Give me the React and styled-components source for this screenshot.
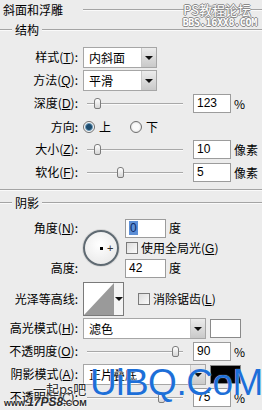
import React from 'react'
import styled, { createGlobalStyle } from 'styled-components'

const GlobalStyle = createGlobalStyle`
  body {
    margin: 0;
    background: #ececec;
  }
`

function Key({ k }) {
    return <Under>{k}</Under>
}

function Slider({ at }) {
    return (
        <Track>
            <Thumb $at={at} />
        </Track>
    )
}

function Select({ value, width }) {
    return (
        <SelectBox $w={width}>
            <SelectValue>{value}</SelectValue>
            <SelectButton><Arrow /></SelectButton>
        </SelectBox>
    )
}

export default function App() {
    return (
        <Dialog>
            <GlobalStyle />
            <Header>
                <Title>斜面和浮雕</Title>
                <Rule $gap={20} />
            </Header>
            <Stamp>
                <StampTop>PS教程论坛</StampTop>
                <StampBottom>BBS.16XX8.COM</StampBottom>
            </Stamp>

            <Legend $top={3}>
                <LegendLead />
                <LegendText>结构</LegendText>
                <Rule />
            </Legend>
            <Rows $top={9}>
                <Row>
                    <Label>样式(<Key k="T" />):</Label>
                    <Select value="内斜面" width={74} />
                </Row>
                <Row>
                    <Label>方法(<Key k="Q" />):</Label>
                    <Select value="平滑" width={74} />
                </Row>
                <Row>
                    <Label>深度(<Key k="D" />):</Label>
                    <Slider at={7} />
                    <NumBox>123</NumBox>
                    <Unit>%</Unit>
                </Row>
                <Row>
                    <Label>方向:</Label>
                    <Radio $on />
                    <RadioText $gap={19}>上</RadioText>
                    <Radio />
                    <RadioText>下</RadioText>
                </Row>
                <Row>
                    <Label>大小(<Key k="Z" />):</Label>
                    <Slider at={7} />
                    <NumBox>10</NumBox>
                    <Unit>像素</Unit>
                </Row>
                <Row>
                    <Label>软化(<Key k="F" />):</Label>
                    <Slider at={30} />
                    <NumBox>5</NumBox>
                    <Unit>像素</Unit>
                </Row>
            </Rows>
            <Divider />

            <Legend $top={5}>
                <LegendLead />
                <LegendText>阴影</LegendText>
                <Rule />
            </Legend>

            <AngleGrid>
                <GridLabel $row={1}>角度(<Key k="N" />):</GridLabel>
                <Dial>
                    <DialDot />
                    <Cross>+</Cross>
                </Dial>
                <GridCell $row={1}>
                    <NumBox $w={41}><Picked>0</Picked></NumBox>
                    <Unit>度</Unit>
                </GridCell>
                <GridCell $row={2}>
                    <Check $left={1} />
                    <CheckText>使用全局光(<Key k="G" />)</CheckText>
                </GridCell>
                <GridLabel $row={3}>高度:</GridLabel>
                <GridCell $row={3}>
                    <NumBox $w={41}>42</NumBox>
                    <Unit>度</Unit>
                </GridCell>
            </AngleGrid>

            <Row $h={34} $top={4}>
                <Label>光泽等高线:</Label>
                <Contour>
                    <svg width="30" height="32" viewBox="0 0 30 32">
                        <polygon points="0,0 30,0 0,32" fill="#ffffff" />
                        <polygon points="30,0 30,32 0,32" fill="#9a9a9a" />
                    </svg>
                    <ContourArrow><Arrow /></ContourArrow>
                </Contour>
                <Check $left={14} />
                <CheckText>消除锯齿(<Key k="L" />)</CheckText>
            </Row>

            <Rows $top={1}>
                <Row>
                    <Label>高光模式(<Key k="H" />):</Label>
                    <Select value="滤色" width={123} />
                    <Swatch $color="#ffffff" />
                </Row>
                <Row>
                    <Label>不透明度(<Key k="O" />):</Label>
                    <Slider at={85} />
                    <NumBox>90</NumBox>
                    <Unit>%</Unit>
                </Row>
                <Row>
                    <Label>阴影模式(<Key k="A" />):</Label>
                    <Select value="正片叠底" width={123} />
                    <Swatch $color="#000000" />
                </Row>
                <Row>
                    <Label>不透明度(<Key k="C" />):</Label>
                    <Slider at={71} />
                    <NumBox>75</NumBox>
                    <Unit>%</Unit>
                </Row>
            </Rows>

            <MarkLeft>
                <MarkSmall>一起ps吧</MarkSmall>
                <MarkSite>www.<b>17PS8</b>.COM</MarkSite>
            </MarkLeft>
            <MarkBig>UiBQ.CoM</MarkBig>
        </Dialog>
    )
}

const Dialog = styled.div`
    position: relative;
    width: 262px;
    height: 410px;
    overflow: hidden;
    background: #ececec;
    font-family: "Noto Sans CJK SC", "Liberation Sans", sans-serif;
    font-size: 12px;
    line-height: 14px;
    color: #000;
`
const Header = styled.div`
    display: flex;
    align-items: center;
    height: 20px;
    padding-left: 3px;
`
const Title = styled.div`
    white-space: nowrap;
`
const Rule = styled.div`
    flex: 1;
    height: 0;
    margin-left: ${p => p.$gap || 0}px;
    border-top: 1px solid #a4a4a4;
    border-bottom: 1px solid #fafafa;
`
const Divider = styled.div`
    margin-top: 5px;
    border-top: 1px solid #a4a4a4;
    border-bottom: 1px solid #fafafa;
`
const Stamp = styled.div`
    position: absolute;
    top: 2px;
    right: 5px;
    text-align: right;
    color: #fff;
    text-shadow: 1px 0 0 #8a8a8a, -1px 0 0 #8a8a8a, 0 1px 0 #8a8a8a, 0 -1px 0 #8a8a8a;
`
const StampTop = styled.div`
    font-size: 13px;
    line-height: 16px;
    padding-right: 6px;
`
const StampBottom = styled.div`
    font-family: "DejaVu Sans Mono", monospace;
    font-size: 10px;
    line-height: 10px;
    font-weight: bold;
    letter-spacing: -0.3px;
`
const Legend = styled.div`
    display: flex;
    align-items: center;
    height: 14px;
    margin-top: ${p => p.$top}px;
`
const LegendLead = styled.div`
    width: 12px;
    border-top: 1px solid #a4a4a4;
    border-bottom: 1px solid #fafafa;
`
const LegendText = styled.div`
    padding: 0 3px;
`
const Rows = styled.div`
    display: flex;
    flex-direction: column;
    margin-top: ${p => p.$top}px;
`
const Row = styled.div`
    display: flex;
    align-items: center;
    height: ${p => p.$h || 23}px;
    margin-top: ${p => p.$top || 0}px;
`
const Label = styled.div`
    width: 83px;
    flex-shrink: 0;
    box-sizing: border-box;
    padding-right: 5px;
    text-align: right;
    white-space: nowrap;
`
const Under = styled.span`
    font-family: "Liberation Sans", sans-serif;
    text-decoration: underline;
`
const SelectBox = styled.div`
    display: flex;
    width: ${p => p.$w}px;
    height: 21px;
    box-sizing: border-box;
    border: 1px solid #a6a6a6;
    background: #fff;
`
const SelectValue = styled.div`
    flex: 1;
    padding-left: 5px;
    line-height: 19px;
    white-space: nowrap;
`
const SelectButton = styled.div`
    width: 14px;
    display: flex;
    align-items: center;
    justify-content: center;
    border-left: 1px solid #c8c8c8;
    background: linear-gradient(#ececec, #c9c9c9);
`
const Arrow = styled.div`
    width: 0;
    height: 0;
    border-left: 4px solid transparent;
    border-right: 4px solid transparent;
    border-top: 4px solid #111;
`
const Track = styled.div`
    position: relative;
    width: 96px;
    height: 12px;
    margin: 0 10px 0 4px;
    &::before {
        content: '';
        position: absolute;
        left: 0;
        right: 0;
        top: 5px;
        border-top: 1px solid #a8a8a8;
        border-bottom: 1px solid #fafafa;
    }
`
const Thumb = styled.div`
    position: absolute;
    left: ${p => p.$at}px;
    top: 0;
    width: 7px;
    height: 11px;
    box-sizing: border-box;
    border: 1px solid #7c7c7c;
    border-radius: 3px 3px 2px 2px;
    background: linear-gradient(#ffffff, #d6d6d6);
`
const NumBox = styled.div`
    width: ${p => p.$w || 38}px;
    height: 19px;
    box-sizing: border-box;
    border: 1px solid #9c9c9c;
    background: #fff;
    padding-left: 3px;
    font-family: "Liberation Sans", sans-serif;
    font-size: 12px;
    line-height: 17px;
`
const Picked = styled.span`
    background: #5d8fd6;
    color: #0c2a66;
    padding: 0 1px;
`
const Unit = styled.div`
    margin-left: 3px;
    white-space: nowrap;
`
const Radio = styled.div`
    width: 12px;
    height: 12px;
    box-sizing: border-box;
    border-radius: 50%;
    border: 1px solid #6f6f6f;
    background: ${p => p.$on
        ? 'radial-gradient(circle, #1d4c6e 0 2.5px, #6f9ab8 3.5px, #fbfbfb 4.5px)'
        : 'radial-gradient(circle, #fbfbfb 0 3px, #dcdcdc 6px)'};
`
const RadioText = styled.div`
    margin-left: 4px;
    margin-right: ${p => p.$gap || 0}px;
`
const AngleGrid = styled.div`
    display: grid;
    grid-template-columns: 83px 42px auto;
    grid-template-rows: 20px 20px 20px;
    margin-top: 8px;
`
const GridLabel = styled.div`
    grid-column: 1;
    grid-row: ${p => p.$row};
    align-self: center;
    text-align: right;
    padding-right: 5px;
    white-space: nowrap;
`
const GridCell = styled.div`
    grid-column: 3;
    grid-row: ${p => p.$row};
    display: flex;
    align-items: center;
`
const Dial = styled.div`
    grid-column: 2;
    grid-row: 1 / 4;
    align-self: center;
    position: relative;
    width: 36px;
    height: 36px;
    box-sizing: border-box;
    border-radius: 50%;
    border: 2px solid #5f6a72;
    background: radial-gradient(circle at 45% 40%, #ffffff, #e4e4e4);
    box-shadow: 0 0 0 1px #d8d8d8;
`
const DialDot = styled.div`
    position: absolute;
    left: 15px;
    top: 15px;
    width: 3px;
    height: 3px;
    background: #000;
`
const Cross = styled.div`
    position: absolute;
    left: 22px;
    top: 9px;
    font-family: "Liberation Sans", sans-serif;
    font-size: 11px;
    color: #333;
`
const Check = styled.div`
    width: 12px;
    height: 12px;
    box-sizing: border-box;
    margin-left: ${p => p.$left}px;
    border: 1px solid #7a7a7a;
    background: linear-gradient(135deg, #dcdcdc, #fbfbfb);
`
const CheckText = styled.div`
    margin-left: 3px;
    white-space: nowrap;
`
const Contour = styled.div`
    display: flex;
    width: 41px;
    height: 34px;
    box-sizing: border-box;
    border: 1px solid #7a7a7a;
    background: #fff;
`
const ContourArrow = styled.div`
    flex: 1;
    display: flex;
    align-items: center;
    justify-content: center;
    background: #f4f4f4;
`
const Swatch = styled.div`
    width: 31px;
    height: 19px;
    margin-left: 4px;
    box-sizing: border-box;
    border: 1px solid #8a8a8a;
    background: ${p => p.$color};
`
const MarkLeft = styled.div`
    position: absolute;
    left: 4px;
    top: 381px;
    color: #2a2a2a;
    text-shadow: 0 0 2px #fff, 0 0 2px #fff;
`
const MarkSmall = styled.div`
    padding-left: 29px;
    font-size: 13px;
    line-height: 15px;
`
const MarkSite = styled.div`
    font-family: "Liberation Sans", sans-serif;
    font-size: 9px;
    line-height: 12px;
    font-weight: bold;
    b {
        font-size: 12px;
        font-style: italic;
    }
`
const MarkBig = styled.div`
    position: absolute;
    left: 90px;
    top: 361px;
    white-space: nowrap;
    font-family: "Liberation Sans", sans-serif;
    font-size: 37px;
    line-height: 44px;
    letter-spacing: -0.5px;
    color: #1d6fd8;
    text-shadow: 0 0 1px #fff;
`
